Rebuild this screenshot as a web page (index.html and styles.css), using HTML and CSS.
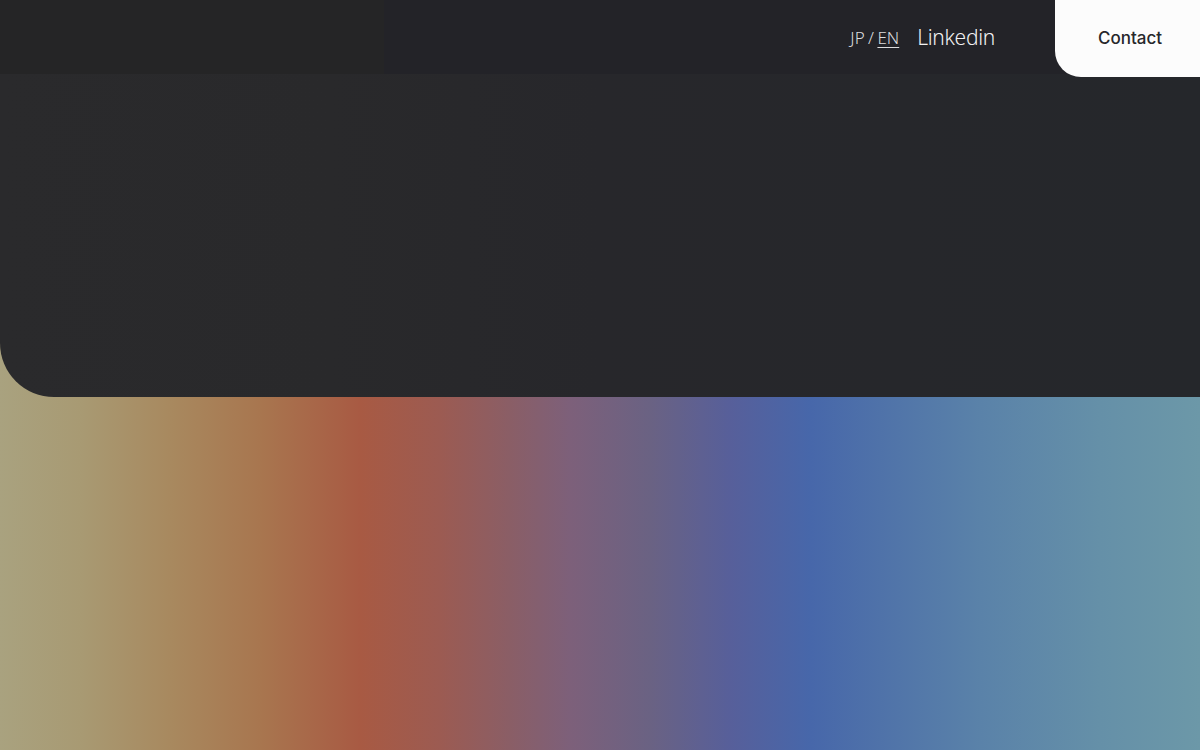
FILE: index.html
```html
<!DOCTYPE html>
<html lang="en">
<head>
<meta charset="utf-8">
<title>Home</title>
<link rel="stylesheet" href="styles.css">
</head>
<body>
<div class="page">
  <header class="header">
    <div class="brand-area"></div>
    <nav class="nav">
      <div class="lang"><span class="lang-jp">JP</span> / <a class="lang-en" href="#">EN</a></div>
      <a class="linkedin" href="#">Linkedin</a>
    </nav>
    <a class="contact" href="#">Contact</a>
  </header>
  <section class="hero"></section>
  <section class="spectrum"></section>
</div>
</body>
</html>
```
FILE: styles.css
```css
html, body {
  margin: 0;
  padding: 0;
  height: 100%;
}
body {
  background: linear-gradient(90deg,
    #a9a27f 0px,
    #a89a73 80px,
    #a8895f 170px,
    #a8764f 260px,
    #a85a43 360px,
    #9c5b52 440px,
    #8a5e66 510px,
    #7d607a 570px,
    #6a6283 650px,
    #575f9a 730px,
    #4767aa 810px,
    #4f72a9 880px,
    #5a82a9 980px,
    #6590a8 1100px,
    #6c98a8 1200px);
  font-family: "Noto Sans", "Liberation Sans", sans-serif;
  overflow: hidden;
}
.page {
  height: 750px;
  display: flex;
  flex-direction: column;
}
.header {
  height: 74px;
  flex: none;
  display: flex;
  align-items: flex-start;
  background: linear-gradient(90deg, #252526 0, #252526 384px, #232328 384px, #232328 100%);
  position: relative;
  z-index: 2;
}
.brand-area {
  flex: 1;
}
.nav {
  display: flex;
  align-items: center;
  height: 74px;
  gap: 18px;
  margin-right: 60px;
}
.lang {
  font-family: "Noto Sans", sans-serif;
  font-weight: 300;
  font-size: 17px;
  color: #dcdcde;
  padding-top: 1px;
  word-spacing: -1px;
}
.lang-en {
  color: #dcdcde;
  text-decoration: underline;
  text-underline-offset: 3px;
  text-decoration-thickness: 1px;
}
.linkedin {
  font-family: "Noto Sans", sans-serif;
  font-weight: 300;
  font-size: 21px;
  letter-spacing: -0.3px;
  color: #f2f2f2;
  text-decoration: none;
  margin-top: -1px;
}
.contact {
  width: 145px;
  height: 77px;
  background: #fcfcfc;
  border-bottom-left-radius: 26px;
  display: flex;
  align-items: center;
  justify-content: center;
  font-family: "Inter", "Roboto", sans-serif;
  font-weight: 500;
  font-size: 17px;
  color: #27272a;
  text-decoration: none;
  padding-left: 5px;
  padding-bottom: 2px;
  box-sizing: border-box;
}
.hero {
  height: 323px;
  flex: none;
  background: linear-gradient(90deg, #2a2a2c 0, #29292b 330px, #27272b 600px, #25272b 1200px);
  border-bottom-left-radius: 54px;
}
.spectrum {
  flex: 1;
}
```
